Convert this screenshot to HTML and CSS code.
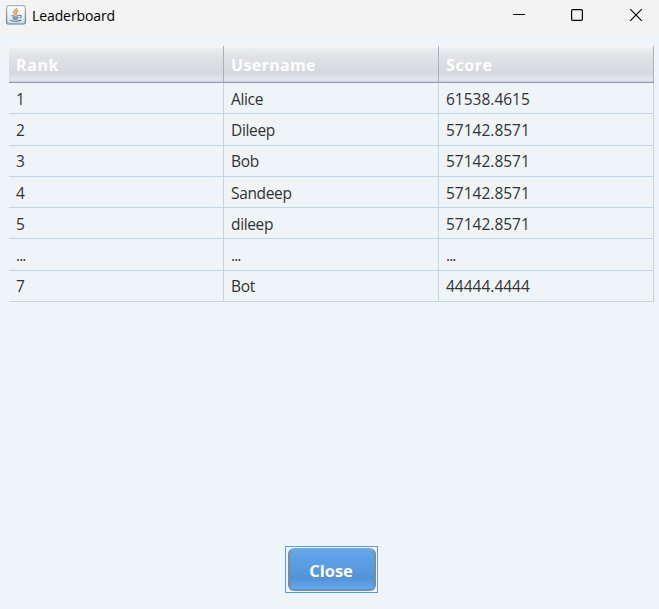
FILE: index.html
```html
<!DOCTYPE html>
<html lang="en">
<head>
<meta charset="utf-8">
<title>Leaderboard</title>
<link rel="stylesheet" href="styles.css">
</head>
<body>
<div class="window">
  <header class="titlebar">
    <svg class="app-icon" width="20" height="20" viewBox="0 0 20 20" fill="none">
      <defs><linearGradient id="tile" x1="0" y1="0" x2="0" y2="1"><stop offset="0" stop-color="#fff"/><stop offset=".5" stop-color="#f2f4f6"/><stop offset="1" stop-color="#c9d9e4"/></linearGradient>
      <linearGradient id="edge" x1="0" y1="0" x2="0" y2="1"><stop offset="0" stop-color="#a5b4c0"/><stop offset="1" stop-color="#527f9f"/></linearGradient></defs>
      <rect x=".6" y=".6" width="18.8" height="18.4" rx="1.8" fill="url(#tile)" stroke="url(#edge)" stroke-width="1.2"/>
      <path d="M10.5 2.8c1 2-3.2 3-2.8 4.8.2 1 1.3 1.500 1.500 2.400M12.300 5.300c-2 1-2.800 1.700-2 2.900.5.8.3 1.300-.3 1.800" stroke="#eb9451" stroke-width="1.500"/>
      <path d="M5.500 10.500c2 .8 5.500.8 7.500 0M6.300 12.300c1.700.7 4.500.7 6 0M4 15.300c3 1.400 9 1.400 11.500-.2M13 10.400c3.200-.6 2.800 2.200.3 2.700M7 13.900c1.500.5 3.500.5 5 0" stroke="#6688a2" stroke-width="1.200"/>
    </svg>
    <h1 class="title">Leaderboard</h1>
    <div class="controls">
      <svg width="14" height="14" viewBox="0 0 14 14"><path d="M1 6.500h12" stroke="#000"/></svg>
      <svg width="14" height="14" viewBox="0 0 14 14"><rect x="1.600" y="1.600" width="10.800" height="10.800" rx="1.200" fill="none" stroke="#000" stroke-width="1.200"/></svg>
      <svg class="exit" width="14" height="14" viewBox="0 0 14 14"><path d="M1.200 1.200l11.600 11.600M12.800 1.200L1.200 12.800" stroke="#000" stroke-width="1.150"/></svg>
    </div>
  </header>
  <main class="content">
    <div class="table">
      <div class="row head"><span>Rank</span><span class="name">Username</span><span>Score</span></div>
      <div class="row"><span>1</span><span class="name">Alice</span><span>61538.4615</span></div>
      <div class="row tall"><span>2</span><span class="name">Dileep</span><span>57142.8571</span></div>
      <div class="row"><span>3</span><span class="name">Bob</span><span>57142.8571</span></div>
      <div class="row"><span>4</span><span class="name">Sandeep</span><span>57142.8571</span></div>
      <div class="row"><span>5</span><span class="name">dileep</span><span>57142.8571</span></div>
      <div class="row tall dots"><span>...</span><span>...</span><span>...</span></div>
      <div class="row"><span>7</span><span class="name">Bot</span><span>44444.4444</span></div>
    </div>
    <div class="close-frame"><button class="close">Close</button></div>
  </main>
</div>
</body>
</html>
```

FILE: styles.css
```css
* { box-sizing: border-box; }
body { margin: 0; font-family: "Open Sans", "Noto Sans", sans-serif; }
.window {
  width: 659px;
  height: 609px;
  display: flex;
  flex-direction: column;
  background: #eff4f9;
  overflow: hidden;
}
.titlebar {
  height: 34px;
  flex: none;
  display: flex;
  align-items: flex-start;
  padding: 5px 16px 0 6px;
  background: #f3f3f3;
}
.title {
  margin: 0 0 0 6px;
  font-size: 14px;
  font-weight: 400;
  line-height: 21px;
  letter-spacing: -0.1px;
  color: #000;
}
.controls {
  display: flex;
  gap: 44px;
  margin: 3px 0 0 auto;
}
.controls svg { display: block; }
.controls .exit { margin-left: 1px; }
.content {
  flex: 1;
  display: flex;
  flex-direction: column;
  justify-content: space-between;
  align-items: center;
  padding: 12px 5px 16px 9px;
}
.table { width: 645px; }
.row {
  display: grid;
  grid-template-columns: repeat(3, 215px);
  grid-template-rows: 100%;
  height: 31px;
  font-size: 15.5px;
  line-height: 33px;
  color: #333;
}
.row.tall { height: 32px; }
.row.tall + .row { line-height: 31px; }
.row span {
  padding-left: 7px;
  border-right: 1px solid #c3d5e5;
  border-bottom: 1px solid #c3d5e5;
}
.row .name { letter-spacing: -0.35px; }
.row.dots { letter-spacing: -0.9px; }
.row.head {
  height: 37px;
  font-size: 16px;
  font-weight: 700;
  line-height: 38px;
  letter-spacing: 0.6px;
  color: #fff;
  background: linear-gradient(#fafafb 0, #ebecef 3px, #e2e3e7 10px, #d6d8de 27px, #e4e7f1 34px, #c9cdda 36px);
}
.row.head span {
  border-right-color: #a9b1bf;
  border-bottom-color: #929bac;
}
.row.head .name { letter-spacing: 0.35px; }
.close-frame {
  width: 93px;
  height: 47px;
  padding: 1px 1px 1px 2px;
  border: 1px solid #6699cc;
  background: #eff4f9;
}
.close {
  display: block;
  width: 100%;
  height: 100%;
  padding: 1px 2px 0 0;
  border: 2px solid #808b98;
  border-top-color: #8ca2ba;
  border-radius: 6px;
  background: linear-gradient(#64a6eb 0, #5a9be0 45%, #5292d7 72%, #64a8ef 100%);
  font-family: inherit;
  font-size: 16.5px;
  font-weight: 700;
  color: #fff;
}
```
